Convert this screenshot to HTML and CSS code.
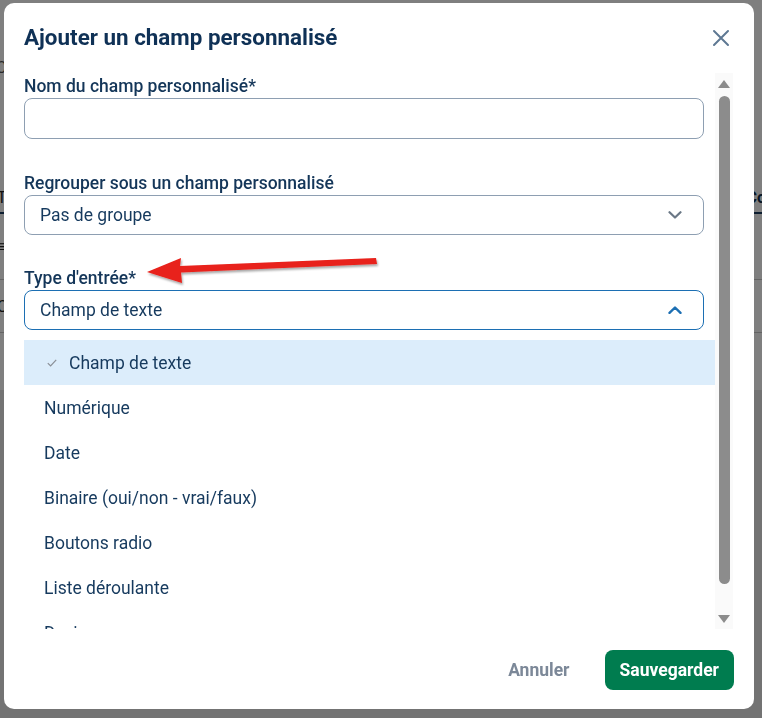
FILE: index.html
```html
<!DOCTYPE html>
<html lang="fr">
<head>
<meta charset="utf-8">
<title>Ajouter un champ personnalisé</title>
<link rel="stylesheet" href="styles.css">
</head>
<body>
<div class="bg-page">
  <div class="bg-top"><span class="bg-c">C</span></div>
  <div class="bg-table">
    <div class="bg-row bg-head"><span class="bg-left">T</span><span class="bg-right">Co</span></div>
    <div class="bg-row bg-r1"><span class="bg-left">≡</span></div>
    <div class="bg-row bg-r2"><span class="bg-left">C</span></div>
    <div class="bg-row bg-r3"></div>
  </div>
  <div class="bg-bottom"></div>
</div>

<div class="overlay">
  <div class="modal">
    <div class="modal-header">
      <h2 class="modal-title">Ajouter un champ personnalisé</h2>
      <button class="close-btn" aria-label="Fermer">
        <svg width="24" height="24" viewBox="0 0 24 24"><path d="M5 5 L19 19 M19 5 L5 19" stroke="#5e7893" stroke-width="2" stroke-linecap="round" fill="none"/></svg>
      </button>
    </div>
    <div class="modal-body">
      <div class="scroll-content">
        <div class="field">
          <label class="field-label">Nom du champ personnalisé*</label>
          <div class="input"></div>
        </div>
        <div class="field field-2">
          <label class="field-label">Regrouper sous un champ personnalisé</label>
          <div class="select">
            <span class="select-value">Pas de groupe</span>
            <svg class="chev" width="14" height="8" viewBox="0 0 14 8"><path d="M1.5 1.2 L7 6.5 L12.5 1.2" stroke="#6b7886" stroke-width="2.2" fill="none" stroke-linecap="round" stroke-linejoin="round"/></svg>
          </div>
        </div>
        <div class="field field-3">
          <label class="field-label">Type d'entrée*</label>
          <div class="select select-open">
            <span class="select-value">Champ de texte</span>
            <svg class="chev" width="14" height="8" viewBox="0 0 14 8"><path d="M1.5 6.8 L7 1.5 L12.5 6.8" stroke="#1c6fb3" stroke-width="2.4" fill="none" stroke-linecap="round" stroke-linejoin="round"/></svg>
          </div>
        </div>
        <ul class="options">
          <li class="option selected">
            <svg class="check" width="10" height="8" viewBox="0 0 10 8"><path d="M0.8 4.2 L3.6 7 L9.2 0.8" stroke="#8a8f96" stroke-width="1.2" fill="none"/></svg>
            <span>Champ de texte</span>
          </li>
          <li class="option">Numérique</li>
          <li class="option">Date</li>
          <li class="option">Binaire (oui/non - vrai/faux)</li>
          <li class="option">Boutons radio</li>
          <li class="option">Liste déroulante</li>
          <li class="option">Devise</li>
        </ul>
      </div>
      <div class="scrollbar">
        <span class="sb-up"></span>
        <span class="sb-thumb"></span>
        <span class="sb-down"></span>
      </div>
    </div>
    <div class="modal-footer">
      <button class="btn-cancel">Annuler</button>
      <button class="btn-save">Sauvegarder</button>
    </div>
  </div>
</div>

<svg class="annotation" width="762" height="718" viewBox="0 0 762 718">
  <defs>
    <filter id="sh" x="-10%" y="-50%" width="120%" height="200%">
      <feDropShadow dx="1" dy="2" stdDeviation="1.2" flood-color="#000" flood-opacity="0.35"/>
    </filter>
  </defs>
  <polygon filter="url(#sh)" fill="#e8201a" points="147,272 181,258 180,266 376,258 377,264 181,272.5 182,283"/>
</svg>
</body>
</html>
```

FILE: styles.css
```css
* { box-sizing: border-box; }

html, body {
  margin: 0;
  padding: 0;
  width: 762px;
  height: 718px;
  overflow: hidden;
  font-family: Roboto, "Liberation Sans", Arial, sans-serif;
}

/* background page (under the backdrop) */
.bg-page {
  height: 718px;
  background: #ffffff;
  display: flex;
  flex-direction: column;
}
.bg-top {
  height: 183px;
}
.bg-c {
  display: block;
  margin: 58px 0 0 -4px;
  color: #555;
  font-size: 16px;
}
.bg-table {
  height: 207px;
  background: #ffffff;
}
.bg-row {
  display: flex;
  justify-content: space-between;
  align-items: center;
  border-bottom: 1px solid #c9c9c9;
  font-size: 16px;
  color: #222;
}
.bg-head { height: 31px; border-bottom: 2px solid #1a3d63; }
.bg-r1 { height: 66px; }
.bg-r2 { height: 53px; }
.bg-r3 { height: 55px; border-bottom: none; }
.bg-left { margin-left: -3px; }
.bg-right { margin-right: -4px; font-weight: 700; color: #10304f; }
.bg-bottom {
  flex: 1;
  background: #e7e7e7;
}

/* overlay & modal */
.overlay {
  position: fixed;
  inset: 0;
  background: rgba(0, 0, 0, 0.5);
  padding: 3px 8px 9px 4px;
  display: flex;
}
.modal {
  flex: 1;
  background: #ffffff;
  border-radius: 10px;
  display: flex;
  flex-direction: column;
  overflow: hidden;
}
.modal-header {
  height: 70px;
  flex: none;
  display: flex;
  justify-content: space-between;
  align-items: flex-start;
  padding: 20px 21px 0 20px;
}
.modal-title {
  margin: 0;
  font-size: 22.4px;
  line-height: 28px;
  font-weight: 700;
  color: #0f3156;
}
.close-btn {
  margin-top: 3px;
  width: 24px;
  height: 24px;
  padding: 0;
  border: none;
  background: none;
  display: flex;
}

.modal-body {
  flex: 1;
  min-height: 0;
  display: flex;
  padding-right: 21px;
}
.scroll-content {
  flex: 1;
  min-width: 0;
  overflow: hidden;
  padding: 2px 11px 0 20px;
}
.field { margin-bottom: 33px; }
.field-2 { margin-bottom: 32px; }
.field-3 { margin-bottom: 4px; }
.field-label {
  display: block;
  font-size: 17.5px;
  line-height: 23px;
  font-weight: 500;
  color: #143659;
}
.input {
  height: 41px;
  border: 1px solid #8e9fb2;
  border-radius: 8px;
  background: #fff;
}
.select {
  height: 40px;
  border: 1px solid #8e9fb2;
  border-radius: 8px;
  display: flex;
  align-items: center;
  justify-content: space-between;
  padding: 0 21px 0 15px;
}
.select-open { border-color: #1c6fb3; }
.select-value {
  font-size: 17.5px;
  color: #163a5e;
}
.chev { display: block; }

.options {
  list-style: none;
  margin: 0 -11px 0 0;
  padding: 6px 0;
}
.option {
  height: 45px;
  display: flex;
  align-items: center;
  padding-left: 20px;
  font-size: 17.5px;
  color: #163a5e;
}
.option.selected { background: #dcedfb; }
.check { margin: 0 12px 0 3px; flex: none; }

/* scrollbar column */
.scrollbar {
  width: 18px;
  flex: none;
  background: #fafafa;
  display: flex;
  flex-direction: column;
  align-items: center;
  padding: 7px 0 6px;
}
.sb-up, .sb-down {
  width: 0;
  height: 0;
  border-left: 6.5px solid transparent;
  border-right: 6.5px solid transparent;
}
.sb-up { border-bottom: 8px solid #8c8c8c; }
.sb-down { border-top: 8px solid #8c8c8c; margin-top: auto; }
.sb-thumb {
  width: 11px;
  height: 488px;
  margin-top: 8px;
  background: #8c8c8c;
  border-radius: 6px;
}

.modal-footer {
  height: 80px;
  flex: none;
  display: flex;
  justify-content: flex-end;
  align-items: flex-start;
  gap: 20px;
  padding: 21px 20px 0;
}
.btn-cancel, .btn-save {
  height: 40px;
  padding: 0 15px;
  border: none;
  border-radius: 8px;
  font-family: Roboto, "Liberation Sans", Arial, sans-serif;
  font-size: 17.5px;
  font-weight: 700;
}
.btn-cancel {
  background: none;
  color: #7c8898;
}
.btn-save {
  background: #007c4f;
  color: #ffffff;
}

.annotation {
  position: fixed;
  left: 0;
  top: 0;
  pointer-events: none;
}
```
